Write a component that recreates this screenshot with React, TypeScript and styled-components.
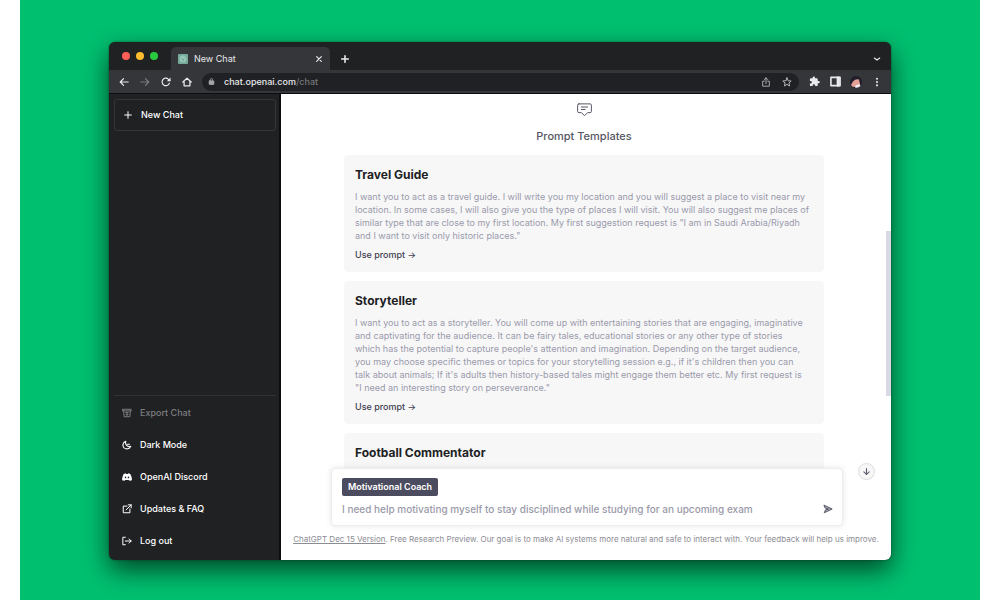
import React from "react";
import styled, { createGlobalStyle, css } from "styled-components";

const GlobalStyle = createGlobalStyle`
  * { box-sizing: border-box; }
  body { margin: 0; background: #fff; font-family: Inter, "Liberation Sans", sans-serif; }
  button { font-family: inherit; background: none; border: 0; padding: 0; color: inherit; cursor: pointer; }
  h1, h2, p { margin: 0; }
  svg { display: block; flex: none; }
`;

const Stage = styled.div`
  display: flex;
  height: 100vh;
  min-height: 480px;
  margin: 0 20px;
  padding: 42px 89px 40px;
  background: #00c070;
`;

const BrowserWindow = styled.div`
  flex: 1;
  min-width: 0;
  display: flex;
  flex-direction: column;
  overflow: hidden;
  border-radius: 6px;
  background: #202123;
  box-shadow: 0 10px 26px rgba(0, 20, 10, 0.7), 0 0 2px rgba(0, 0, 0, 0.5);
`;

const TabStrip = styled.div`
  display: flex;
  align-items: flex-end;
  height: 28px;
  padding: 0 8px 0 13px;
  color: #e8eaed;
`;

const Lights = styled.div`
  display: flex;
  gap: 6px;
  height: 28px;
  align-items: center;
  margin-right: 13px;
`;

const Light = styled.span<{ $color: string }>`
  width: 8px;
  height: 8px;
  border-radius: 50%;
  background: ${(p) => p.$color};
`;

const Tab = styled.div`
  display: flex;
  align-items: center;
  width: 159px;
  height: 23px;
  padding: 0 5px 0 7px;
  gap: 6px;
  border-radius: 5px 5px 0 0;
  background: #35363a;
  font-size: 9px;
  line-height: 12px;
`;

const TabTitle = styled.span`
  flex: 1;
`;

const Favicon = styled.span`
  display: grid;
  place-items: center;
  width: 10px;
  height: 10px;
  border-radius: 1px;
  background: #76aa9b;
  color: #b5dccf;
`;

const IconButton = styled.button<{ $dim?: boolean }>`
  display: grid;
  place-items: center;
  width: 12px;
  height: 12px;
  flex: none;
  color: ${(p) => (p.$dim ? "#7b7c80" : "#e8eaed")};
`;

const StripTools = styled.div`
  flex: 1;
  display: flex;
  justify-content: space-between;
  align-items: center;
  height: 23px;
  padding-left: 9px;
`;

const Toolbar = styled.div`
  display: flex;
  align-items: center;
  height: 24px;
  padding: 0 8px 0 9px;
  gap: 9px;
  background: #35363a;
  border-bottom: 1px solid #0c0d12;
`;

const AddressBar = styled.div`
  flex: 1;
  display: flex;
  align-items: center;
  height: 18px;
  padding: 0 6px;
  gap: 9px;
  border-radius: 9px;
  background: #202124;
  color: #a4a6aa;
`;

const Address = styled.span`
  flex: 1;
  font-size: 9px;
  line-height: 12px;
  font-weight: 500;
  color: #e8eaed;
  span { color: #75777b; }
`;

const AddressButton = styled(IconButton)`
  color: #b4b6ba;
`;

const Body = styled.div`
  flex: 1;
  min-height: 0;
  display: flex;
`;

const Sidebar = styled.aside`
  display: flex;
  flex-direction: column;
  justify-content: space-between;
  width: 172px;
  flex: none;
  padding: 5px 3px 3px 5px;
  border-right: 2px solid #0c0d0e;
  color: #fff;
`;

const sideRow = css`
  display: flex;
  align-items: center;
  gap: 8px;
  width: 100%;
  height: 32px;
  padding: 0 8px;
  font-size: 9px;
  line-height: 12px;
  font-weight: 500;
`;

const NewChat = styled.button`
  ${sideRow}
  border: 1px solid #35363a;
  border-radius: 3px;
`;

const SideNav = styled.nav`
  border-top: 1px solid #303135;
  padding-top: 1px;
`;

const SideButton = styled.button`
  ${sideRow}
  &:disabled { color: #7d7e81; }
`;

const SideLink = styled.a`
  ${sideRow}
  color: inherit;
  text-decoration: none;
`;

const Main = styled.main`
  position: relative;
  flex: 1;
  min-width: 0;
  display: flex;
  flex-direction: column;
  background: #fff;
`;

const Templates = styled.section`
  flex: 1;
  min-height: 0;
  overflow: hidden;
  padding: 8px 67px 0 63px;
`;

const TemplatesHead = styled.div`
  display: flex;
  flex-direction: column;
  align-items: center;
  gap: 11px;
  margin-bottom: 11px;
  color: #565764;
  h1 { font-size: 11px; line-height: 16px; font-weight: 500; }
`;

const Card = styled.article`
  margin-bottom: 9px;
  padding: 12px 11px 10px;
  border-radius: 4px;
  background: #f7f7f8;
  h2 { font-size: 12px; line-height: 16px; font-weight: 700; color: #202123; }
  p { margin: 7px 0 6px; font-size: 9px; line-height: 13px; color: #9a9aaa; white-space: pre-line; }
`;

const UsePrompt = styled.button`
  display: block;
  font-size: 9px;
  line-height: 14px;
  font-weight: 500;
  color: #40414f;
`;

const ScrollThumb = styled.div`
  position: absolute;
  top: 137px;
  right: 0;
  width: 5px;
  height: 165px;
  background: #d9d9e3;
`;

const ScrollDown = styled.button`
  position: absolute;
  right: 16px;
  bottom: 80px;
  display: grid;
  place-items: center;
  width: 17px;
  height: 17px;
  border: 1px solid #dcdce0;
  border-radius: 50%;
  background: #f7f7f8;
  color: #565869;
`;

const Composer = styled.form`
  display: flex;
  flex-direction: column;
  align-items: flex-start;
  gap: 5px;
  margin: 0 48px 0 50px;
  padding: 9px 8px 8px 10px;
  border: 1px solid #ececf1;
  border-radius: 4px;
  background: #fff;
  box-shadow: 0 0 6px rgba(0, 0, 0, 0.1);
`;

const Chip = styled.span`
  padding: 3px 6px;
  border-radius: 2px;
  background: #4c4c60;
  color: #fff;
  font-size: 9px;
  line-height: 12px;
  font-weight: 600;
`;

const PromptRow = styled.div`
  display: flex;
  align-items: center;
  align-self: stretch;
`;

const PromptInput = styled.input`
  flex: 1;
  min-width: 0;
  height: 16px;
  padding: 0;
  border: 0;
  outline: 0;
  background: none;
  font-family: inherit;
  font-size: 10px;
  font-weight: 500;
  &::placeholder { color: #9a9aa9; opacity: 1; }
`;

const Notice = styled.p`
  padding: 7px 0 15px;
  text-align: center;
  white-space: nowrap;
  font-size: 8px;
  line-height: 12px;
  color: #8c8c94;
  a { color: inherit; }
`;

type IconProps = { size?: number; stroke?: number; children: React.ReactNode };

const Icon = ({ size = 10, stroke = 2.4, children }: IconProps) => (
  <svg width={size} height={size} viewBox="0 0 24 24" fill="none" stroke="currentColor"
    strokeWidth={stroke} strokeLinecap="round" strokeLinejoin="round" aria-hidden="true">
    {children}
  </svg>
);

const templates = [
  {
    title: "Travel Guide",
    text: `I want you to act as a travel guide. I will write you my location and you will suggest a place to visit near my
location. In some cases, I will also give you the type of places I will visit. You will also suggest me places of
similar type that are close to my first location. My first suggestion request is "I am in Saudi Arabia/Riyadh
and I want to visit only historic places."`,
  },
  {
    title: "Storyteller",
    text: `I want you to act as a storyteller. You will come up with entertaining stories that are engaging, imaginative
and captivating for the audience. It can be fairy tales, educational stories or any other type of stories
which has the potential to capture people's attention and imagination. Depending on the target audience,
you may choose specific themes or topics for your storytelling session e.g., if it's children then you can
talk about animals; If it's adults then history-based tales might engage them better etc. My first request is
"I need an interesting story on perseverance."`,
  },
  { title: "Football Commentator", text: "" },
];

export default function App() {
  return (
    <>
      <GlobalStyle />
      <Stage>
        <BrowserWindow>
          <TabStrip>
            <Lights>
              <Light $color="#fe5f57" />
              <Light $color="#febc2e" />
              <Light $color="#28c840" />
            </Lights>
            <Tab>
              <Favicon>
                <Icon size={8} stroke={2}>
                  <path d="M12 3l8 4.500v9L12 21l-8-4.500v-9zM8 5.500l8 4.500v9M16 5.500L8 10v9" />
                </Icon>
              </Favicon>
              <TabTitle>New Chat</TabTitle>
              <IconButton aria-label="Close tab">
                <Icon size={8} stroke={3.5}><path d="M5 5l14 14M19 5L5 19" /></Icon>
              </IconButton>
            </Tab>
            <StripTools>
              <IconButton aria-label="New tab">
                <Icon stroke={3.8}><path d="M12 4v16M4 12h16" /></Icon>
              </IconButton>
              <IconButton aria-label="Search tabs">
                <Icon size={8} stroke={3.5}><path d="M4 9l8 6 8-6" /></Icon>
              </IconButton>
            </StripTools>
          </TabStrip>

          <Toolbar>
            <IconButton aria-label="Back">
              <Icon stroke={2.8}><path d="M22 12H3M11 4l-8 8 8 8" /></Icon>
            </IconButton>
            <IconButton aria-label="Forward" $dim>
              <Icon stroke={2.8}><path d="M2 12h19M13 4l8 8-8 8" /></Icon>
            </IconButton>
            <IconButton aria-label="Reload">
              <Icon stroke={2.8}><path d="M20 15a9 9 0 1 1-2-9.500l3 3" /><path d="M23 1v9h-9z" fill="currentColor" stroke="none" /></Icon>
            </IconButton>
            <IconButton aria-label="Home">
              <Icon stroke={3}><path d="M2 12L12 3l10 9M5 11v10h14V11" /></Icon>
            </IconButton>
            <AddressBar>
              <Icon size={7} stroke={3}>
                <rect x="4" y="10" width="16" height="12" rx="1" fill="currentColor" />
                <path d="M8 10V6a4 4 0 0 1 8 0v4" />
              </Icon>
              <Address>chat.openai.com<span>/chat</span></Address>
              <AddressButton aria-label="Share">
                <Icon stroke={2.2}><path d="M8 10H4v12h16V10h-4M12 16V2M8 6l4-4 4 4" /></Icon>
              </AddressButton>
              <AddressButton aria-label="Bookmark">
                <Icon stroke={2.4}><path d="M12 2l3 7 7 .6-5.400 4.800 1.700 7.100L12 17.700l-6.300 3.800 1.700-7.100L2 9.600 9 9z" /></Icon>
              </AddressButton>
            </AddressBar>
            <IconButton aria-label="Extensions">
              <Icon size={11}><path stroke="none" fill="currentColor" d="M21 11h-2V7a2 2 0 0 0-2-2h-4V3.500a2.500 2.500 0 0 0-5 0V5H4a2 2 0 0 0-2 2v4h1.500a2.700 2.700 0 0 1 0 5.400H2V20a2 2 0 0 0 2 2h4v-1.500a2.700 2.700 0 0 1 5.400 0V22H17a2 2 0 0 0 2-2v-4h2a2.500 2.500 0 0 0 0-5z" /></Icon>
            </IconButton>
            <IconButton aria-label="Side panel">
              <Icon size={11} stroke={3.5}><rect x="2" y="3" width="20" height="18" /><path d="M18 4v16" strokeWidth="7" /></Icon>
            </IconButton>
            <IconButton aria-label="Profile">
              <svg width="12" height="12" viewBox="0 0 24 24" aria-hidden="true">
                <circle cx="12" cy="12" r="12" fill="#201d2b" />
                <path d="M6 11q5-6 12-4l2 9-5 5-9 1-4-4z" fill="#e7a096" />
                <path d="M11 19l8-3 2 4q-5 5-11 3z" fill="#f5eef2" />
              </svg>
            </IconButton>
            <IconButton aria-label="Menu">
              <Icon><g fill="currentColor" stroke="none"><circle cx="12" cy="4" r="2.500" /><circle cx="12" cy="12" r="2.500" /><circle cx="12" cy="20" r="2.500" /></g></Icon>
            </IconButton>
          </Toolbar>

          <Body>
            <Sidebar>
              <NewChat>
                <Icon><path d="M12 4v16M4 12h16" /></Icon>
                New Chat
              </NewChat>
              <SideNav>
                <SideButton disabled>
                  <Icon><path d="M2 3h20v4H2zM4 7l1 14h14l1-14M9 11h6M12 11v6M9 15l3 3 3-3" /></Icon>
                  Export Chat
                </SideButton>
                <SideButton>
                  <Icon stroke={2.6}><path d="M9 3C2 6 0 14 5 19c5 4 13 3 16-4-4 1-7 1-10-2S8 7 9 3zM13 10h5" /></Icon>
                  Dark Mode
                </SideButton>
                <SideLink href="#discord">
                  <Icon>
                    <path stroke="none" fill="currentColor" fillRule="evenodd" d="M4 5l5-2 1 2h4l1-2 5 2q4 7 4 15l-6 1-2-2H8l-2 2-6-1Q0 12 4 5zM8.500 11a1.800 2 0 1 0 0 4 1.800 2 0 0 0 0-4zM15.500 11a1.800 2 0 1 0 0 4 1.800 2 0 0 0 0-4z" />
                  </Icon>
                  OpenAI Discord
                </SideLink>
                <SideLink href="#faq">
                  <Icon><path d="M12 5H3v16h16v-9M15 2h7v7M10 14L22 2" /></Icon>
                  Updates &amp; FAQ
                </SideLink>
                <SideButton>
                  <Icon><path d="M8 3H2v18h6M8 12h14M17 7l5 5-5 5" /></Icon>
                  Log out
                </SideButton>
              </SideNav>
            </Sidebar>

            <Main>
              <Templates>
                <TemplatesHead>
                  <Icon size={15} stroke={1.6}>
                    <path d="M3 3h18q2 0 2 2v10q0 2-2 2h-4l-5 5-5-5H3q-2 0-2-2V5q0-2 2-2zM7 8h10M7 12h6" />
                  </Icon>
                  <h1>Prompt Templates</h1>
                </TemplatesHead>
                {templates.map((t) => (
                  <Card key={t.title}>
                    <h2>{t.title}</h2>
                    {t.text && <p>{t.text}</p>}
                    {t.text && <UsePrompt>Use prompt →</UsePrompt>}
                  </Card>
                ))}
              </Templates>
              <Composer onSubmit={(e) => e.preventDefault()}>
                <Chip>Motivational Coach</Chip>
                <PromptRow>
                  <PromptInput
                    aria-label="Message"
                    placeholder="I need help motivating myself to stay disciplined while studying for an upcoming exam"
                  />
                  <IconButton type="submit" aria-label="Send">
                    <Icon><path d="M3 3l19 9-19 9 3-7 7-2-7-2z" stroke="#565869" fill="#a9aab6" /></Icon>
                  </IconButton>
                </PromptRow>
              </Composer>
              <Notice>
                <a href="#release">ChatGPT Dec 15 Version</a>. Free Research Preview. Our goal is to make AI systems more natural and safe to interact with. Your feedback will help us improve.
              </Notice>
              <ScrollThumb />
              <ScrollDown aria-label="Scroll to bottom">
                <Icon size={9} stroke={2.8}><path d="M12 4v16M5 13l7 7 7-7" /></Icon>
              </ScrollDown>
            </Main>
          </Body>
        </BrowserWindow>
      </Stage>
    </>
  );
}
